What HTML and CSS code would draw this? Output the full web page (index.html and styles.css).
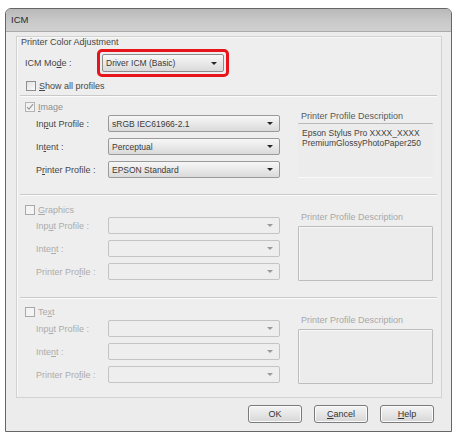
FILE: index.html
```html
<!DOCTYPE html>
<html lang="en">
<head>
<meta charset="utf-8">
<title>ICM</title>
<link rel="stylesheet" href="styles.css">
</head>
<body>
<div class="window">
  <div class="titlebar">ICM</div>
  <div class="client">
    <div class="frame">
      <div class="frame-title">Printer Color Adjustment</div>

      <div class="mode-row">
        <span class="mode-label">ICM Mo<u>d</u>e :</span>
        <div class="highlight">
          <div class="combo combo-mode"><span>Driver ICM (Basic)</span><i class="arrow"></i></div>
        </div>
      </div>

      <div class="check check-show"><span class="box"></span><span><u>S</u>how all profiles</span></div>

      <div class="sep"></div>

      <section class="group group-image">
        <div class="group-left">
          <div class="check check-disabled"><span class="box"><svg width="8" height="8" viewBox="0 0 8 8"><path d="M1 4.2 L3 6.2 L7 1.2" fill="none" stroke="#9a9a9a" stroke-width="1.2"/></svg></span><span class="check-text-soft"><u>I</u>mage</span></div>
          <div class="fields">
            <div class="field"><span class="field-label">In<u>p</u>ut Profile :</span><div class="combo"><span>sRGB IEC61966-2.1</span><i class="arrow"></i></div></div>
            <div class="field"><span class="field-label">In<u>t</u>ent :</span><div class="combo"><span>Perceptual</span><i class="arrow"></i></div></div>
            <div class="field"><span class="field-label">P<u>r</u>inter Profile :</span><div class="combo"><span>EPSON Standard</span><i class="arrow"></i></div></div>
          </div>
        </div>
        <div class="desc desc-image">
          <div class="desc-title">Printer Profile Description</div>
          <div class="desc-box desc-box-static">
            <div>Epson Stylus Pro XXXX_XXXX</div>
            <div>PremiumGlossyPhotoPaper250</div>
          </div>
        </div>
      </section>

      <div class="sep sep-gap"></div>

      <section class="group group-graphics disabled">
        <div class="group-left">
          <div class="check"><span class="box"></span><span class="check-text"><u>G</u>raphics</span></div>
          <div class="fields">
            <div class="field"><span class="field-label">Inp<u>u</u>t Profile :</span><div class="combo"><span></span><i class="arrow"></i></div></div>
            <div class="field"><span class="field-label">Inte<u>n</u>t :</span><div class="combo"><span></span><i class="arrow"></i></div></div>
            <div class="field"><span class="field-label">Printer Pro<u>f</u>ile :</span><div class="combo"><span></span><i class="arrow"></i></div></div>
          </div>
        </div>
        <div class="desc">
          <div class="desc-title">Printer Profile Description</div>
          <div class="desc-box"></div>
        </div>
      </section>

      <div class="sep sep-gap"></div>

      <section class="group group-text disabled">
        <div class="group-left">
          <div class="check"><span class="box"></span><span class="check-text">Te<u>x</u>t</span></div>
          <div class="fields">
            <div class="field"><span class="field-label">Inp<u>u</u>t Profile :</span><div class="combo"><span></span><i class="arrow"></i></div></div>
            <div class="field"><span class="field-label">Inte<u>n</u>t :</span><div class="combo"><span></span><i class="arrow"></i></div></div>
            <div class="field"><span class="field-label">Printer Pro<u>f</u>ile :</span><div class="combo"><span></span><i class="arrow"></i></div></div>
          </div>
        </div>
        <div class="desc">
          <div class="desc-title">Printer Profile Description</div>
          <div class="desc-box"></div>
        </div>
      </section>
    </div>

    <div class="buttons">
      <button class="btn">OK</button>
      <button class="btn"><u>C</u>ancel</button>
      <button class="btn"><u>H</u>elp</button>
    </div>
  </div>
</div>
</body>
</html>
```

FILE: styles.css
```css
* {
  box-sizing: border-box;
}

html, body {
  margin: 0;
  padding: 0;
  background: #ffffff;
}

body {
  padding: 8px 0 0 5px;
  font-family: "Liberation Sans", Arial, sans-serif;
  font-size: 9px;
  color: #444444;
}

u {
  text-decoration-thickness: 1px;
  text-underline-offset: 1px;
}

/* window chrome */
.window {
  width: 447px;
  height: 424px;
  border: 1px solid #666666;
  border-radius: 6px 6px 0 0;
  display: flex;
  flex-direction: column;
  overflow: hidden;
  background: #ececec;
}

.titlebar {
  height: 23px;
  flex: none;
  padding-left: 5px;
  line-height: 21px;
  font-size: 9.5px;
  color: #2a2a2a;
  background: linear-gradient(#b9b9b9, #c9c9c9 55%, #d0d0d0);
  border-bottom: 1px solid #a9a9a9;
}

.client {
  flex: 1;
  display: flex;
  flex-direction: column;
  padding: 4px 9px 0 10px;
  background: #ececec;
}

/* outer etched frame */
.frame {
  height: 362px;
  border: 1px solid #d2d2d2;
  box-shadow: inset 1px 1px 0 #f8f8f8;
  display: flex;
  flex-direction: column;
  background: #eeeeee;
}

.frame-title {
  height: 11px;
  line-height: 11px;
  padding-left: 4px;
  color: #474747;
}

.mode-row {
  margin-top: 1px;
  display: flex;
  align-items: center;
  padding-left: 8px;
}

.mode-label {
  width: 72px;
  color: #474747;
}

.highlight {
  width: 132px;
  height: 28px;
  border: 3px solid #e8141c;
  border-radius: 5px;
  padding: 2px;
}

/* combo boxes */
.combo {
  height: 17px;
  width: 172px;
  border: 1px solid #9a9a9a;
  border-radius: 2px;
  background: linear-gradient(#f7f7f7, #e9e9e9 50%, #dadada);
  display: flex;
  align-items: center;
  justify-content: space-between;
  padding: 0 6px 0 3px;
  color: #3a3a3a;
  font-size: 8.5px;
  white-space: nowrap;
}

.combo-mode {
  width: 122px;
  height: 18px;
  border-color: #8c8c8c;
}

.arrow {
  display: block;
  width: 0;
  height: 0;
  border-left: 3px solid transparent;
  border-right: 3px solid transparent;
  border-top: 3px solid #262626;
}

/* checkboxes */
.check {
  display: flex;
  align-items: center;
  height: 10px;
  gap: 3px;
  color: #474747;
}

.check-show {
  margin-top: 4px;
  padding-left: 9px;
}

.box {
  width: 10px;
  height: 10px;
  flex: none;
  border: 1px solid #8e8e8e;
  background: linear-gradient(135deg, #e2e2e2, #fafafa);
  display: flex;
  align-items: center;
  justify-content: center;
}

.check-disabled .box {
  border-color: #b4b4b4;
  background: #f2f2f2;
}

.check-text-soft {
  color: #8e8e8e;
}

/* separators */
.sep {
  height: 2px;
  margin: 4px 4px 0 3px;
  border-top: 1px solid #c9c9c9;
  border-bottom: 1px solid #fbfbfb;
}

.sep-gap {
  margin-top: 16px;
}

/* sections */
.group {
  display: flex;
  gap: 18px;
}

.group-left {
  display: flex;
  flex-direction: column;
  width: 263px;
}

.group .check {
  padding-left: 8px;
}

.group-image .group-left {
  padding-top: 5px;
}

.group-graphics .group-left {
  padding-top: 9px;
}

.group-text .group-left {
  padding-top: 8px;
}

.fields {
  display: flex;
  flex-direction: column;
  gap: 6px;
  margin-top: 3px;
}

.group-graphics .fields {
  margin-top: 2px;
}

.field {
  display: flex;
  align-items: center;
  padding-left: 19px;
}

.field-label {
  width: 72px;
  color: #474747;
}

/* description column */
.desc {
  width: 135px;
  display: flex;
  flex-direction: column;
  padding-top: 16px;
}

.desc-title {
  height: 10px;
  line-height: 10px;
  padding-left: 3px;
  color: #a8a8a8;
}

.desc-box {
  height: 55px;
  margin-top: 4px;
  border: 1px solid #bdbdbd;
  border-radius: 1px;
  box-shadow: inset 1px 1px 0 #f7f7f7;
  background: #ececec;
}

.desc-image {
  padding-top: 14px;
}

.desc-image .desc-title {
  color: #5a5a5a;
}

.desc-box-static {
  margin-top: 2px;
  border: none;
  border-top: 1px solid #b9b9b9;
  border-bottom: 1px solid #fafafa;
  box-shadow: none;
  padding: 4px 0 0 4px;
  line-height: 10px;
  color: #444444;
  font-size: 8.5px;
}

/* disabled sections */
.disabled .check {
  color: #ababab;
}

.disabled .box {
  border-color: #a8a8a8;
  background: #f4f4f4;
}

.disabled .field-label {
  color: #acacac;
}

.disabled .combo {
  border-color: #c4c4c4;
  background: #eeeeee;
}

.disabled .arrow {
  border-top-color: #9a9a9a;
}

/* dialog buttons */
.buttons {
  margin-top: 7px;
  display: flex;
  justify-content: flex-end;
  gap: 12px;
  padding-right: 8px;
}

.btn {
  width: 54px;
  height: 18px;
  padding: 0;
  border: 1px solid #7a7a7a;
  border-radius: 3px;
  background: linear-gradient(#f4f4f4, #e6e6e6 50%, #d6d6d6);
  box-shadow: inset 0 0 0 1px #fbfbfb;
  font-family: "Liberation Sans", Arial, sans-serif;
  font-size: 9px;
  color: #333333;
}
```
